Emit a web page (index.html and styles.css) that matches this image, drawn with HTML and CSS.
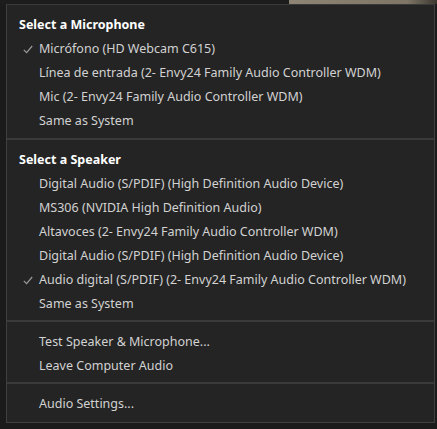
FILE: index.html
```html
<!DOCTYPE html>
<html>
<head>
<meta charset="utf-8">
<link rel="stylesheet" href="styles.css">
</head>
<body>
<div class="backdrop">
  <div class="bd-dark"></div>
  <div class="bd-photo"></div>
</div>
<div class="stage">
  <div class="menu">
    <div class="section">
      <div class="header">Select a Microphone</div>
      <div class="item checked"><svg class="check" width="10" height="9" viewBox="0 0 10 9"><polyline points="0.8,4.8 3.6,7.6 9.2,1" fill="none" stroke="#9a9a9a" stroke-width="1.2"/></svg>Micrófono (HD Webcam C615)</div>
      <div class="item">Línea de entrada (2- Envy24 Family Audio Controller WDM)</div>
      <div class="item">Mic (2- Envy24 Family Audio Controller WDM)</div>
      <div class="item">Same as System</div>
    </div>
    <div class="sep"></div>
    <div class="section tight">
      <div class="header">Select a Speaker</div>
      <div class="item">Digital Audio (S/PDIF) (High Definition Audio Device)</div>
      <div class="item">MS306 (NVIDIA High Definition Audio)</div>
      <div class="item">Altavoces (2- Envy24 Family Audio Controller WDM)</div>
      <div class="item">Digital Audio (S/PDIF) (High Definition Audio Device)</div>
      <div class="item checked"><svg class="check" width="10" height="9" viewBox="0 0 10 9"><polyline points="0.8,4.8 3.6,7.6 9.2,1" fill="none" stroke="#9a9a9a" stroke-width="1.2"/></svg>Audio digital (S/PDIF) (2- Envy24 Family Audio Controller WDM)</div>
      <div class="item">Same as System</div>
    </div>
    <div class="sep"></div>
    <div class="section tight">
      <div class="item">Test Speaker &amp; Microphone...</div>
      <div class="item">Leave Computer Audio</div>
    </div>
    <div class="sep"></div>
    <div class="section">
      <div class="item">Audio Settings...</div>
    </div>
  </div>
</div>
</body>
</html>
```

FILE: styles.css
```css
html, body {
  margin: 0;
  padding: 0;
}
body {
  background: #141414;
  width: 437px;
  height: 429px;
  overflow: hidden;
  font-family: "Noto Sans", "Open Sans", sans-serif;
  font-size: 12.5px;
  color: #d2d2d2;
}
.backdrop {
  display: flex;
  height: 4px;
}
.bd-dark {
  width: 289px;
  background: #1d1d1d;
}
.bd-photo {
  flex: 1;
  background: linear-gradient(90deg, #8d8473, #7e7566 80%, #3b372f);
}
.stage {
  background: #1b1b1b;
  padding-left: 6px;
  height: 425px;
}
.menu {
  width: 427px;
  height: 417px;
  background: #242424;
  border: 1px solid #404040;
  border-top-color: #3a3a3a;
}
.section {
  padding: 6px 0 7px;
}
.section.tight {
  padding-bottom: 6px;
}
.sep {
  height: 2px;
  background: #3a3a3a;
}
.header,
.item {
  box-sizing: border-box;
  height: 24px;
  padding-top: 2px;
  line-height: 24px;
  white-space: nowrap;
}
.header {
  padding-left: 12px;
  font-weight: bold;
  color: #ffffff;
}
.item {
  position: relative;
  padding-left: 32px;
}
.check {
  position: absolute;
  left: 16px;
  top: 10px;
}
```
